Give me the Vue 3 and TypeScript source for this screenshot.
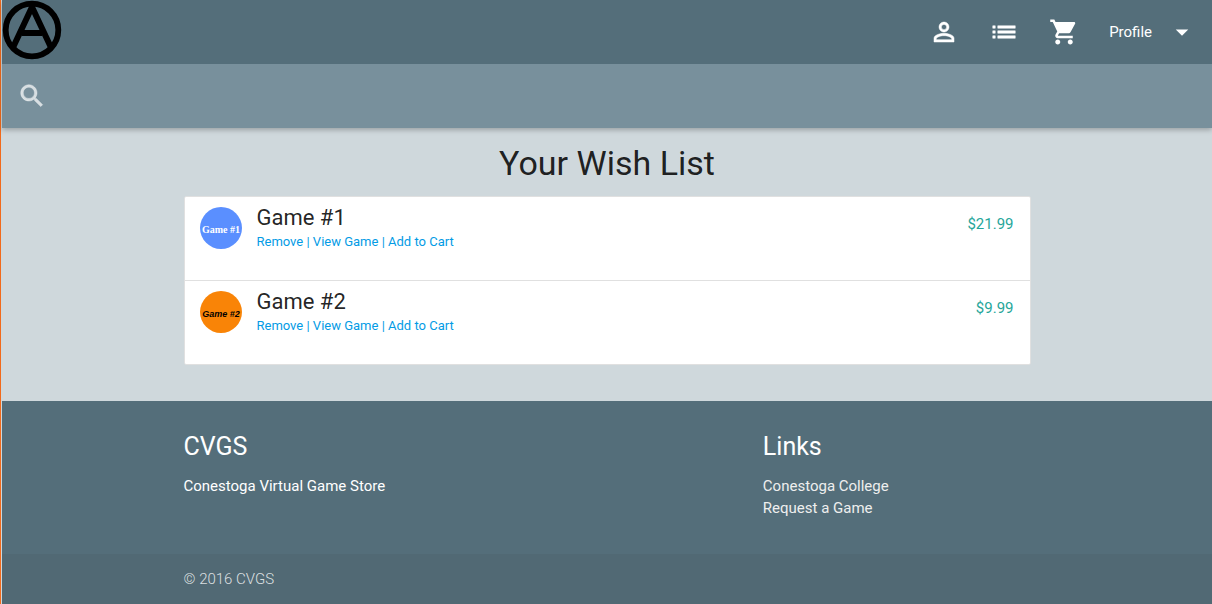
<script setup lang="ts">
interface Game {
  id: number
  name: string
  price: string
}

const games: Game[] = [
  { id: 1, name: 'Game #1', price: '$21.99' },
  { id: 2, name: 'Game #2', price: '$9.99' },
]
const actions: string[] = ['Remove', 'View Game', 'Add to Cart']
const links: string[] = ['Conestoga College', 'Request a Game']
</script>

<template>
  <div class="page">
    <header class="header">
      <nav class="nav">
        <a class="brand" href="#" aria-label="Home">
          <svg width="60" height="60" viewBox="0 0 60 60" fill="none" stroke="#000">
            <circle cx="30" cy="30" r="26.3" stroke-width="5.8" />
            <path d="M11 47.500 L30 7 L49 47.500 M20 33 H40" stroke-width="6" stroke-linejoin="bevel" />
          </svg>
        </a>
        <ul class="nav-items">
          <li>
            <a href="#" aria-label="Account">
              <svg class="icon" viewBox="0 0 24 24"><path d="M12 5.900a2.100 2.100 0 1 1 0 4.200 2.100 2.100 0 0 1 0-4.200m0 9c2.970 0 6.100 1.460 6.100 2.100v1.100H5.900V17c0-.64 3.130-2.100 6.100-2.100M12 4C9.790 4 8 5.790 8 8s1.790 4 4 4 4-1.790 4-4-1.790-4-4-4zm0 9c-2.670 0-8 1.340-8 4v3h16v-3c0-2.660-5.330-4-8-4z" stroke="currentColor" stroke-width="0.4" /></svg>
            </a>
          </li>
          <li>
            <a href="#" aria-label="Wish list">
              <svg class="icon" viewBox="0 0 24 24"><path d="M3 13h2v-2H3v2zm0 4h2v-2H3v2zm0-8h2V7H3v2zm4 4h14v-2H7v2zm0 4h14v-2H7v2zM7 7v2h14V7H7z" stroke="currentColor" stroke-width="0.4" /></svg>
            </a>
          </li>
          <li>
            <a href="#" aria-label="Cart">
              <svg class="icon" viewBox="0 0 24 24"><path d="M7 18c-1.100 0-1.990.9-1.990 2S5.900 22 7 22s2-.9 2-2-.9-2-2-2zM1 2v2h2l3.600 7.590-1.350 2.450c-.16.280-.25.610-.25.960 0 1.100.9 2 2 2h12v-2H7.420c-.14 0-.25-.11-.25-.25l.03-.12.900-1.630h7.450c.75 0 1.410-.41 1.750-1.030l3.580-6.490c.08-.14.120-.31.120-.48 0-.55-.45-1-1-1H5.210l-.94-2H1zm16 16c-1.100 0-1.990.9-1.990 2s.89 2 1.990 2 2-.9 2-2-.9-2-2-2z" /></svg>
            </a>
          </li>
          <li>
            <button class="profile" type="button">
              Profile
              <svg class="icon" viewBox="0 0 24 24"><path d="M7 10l5 5 5-5z" /></svg>
            </button>
          </li>
        </ul>
      </nav>
      <form class="search" @submit.prevent>
        <label for="search" aria-label="Search">
          <svg class="icon" viewBox="0 0 24 24"><path d="M15.500 14h-.79l-.28-.27C15.410 12.590 16 11.110 16 9.500 16 5.910 13.090 3 9.500 3S3 5.910 3 9.500 5.910 16 9.500 16c1.610 0 3.090-.59 4.230-1.570l.27.280v.79l5 4.990L20.490 19l-4.990-5zm-6 0C7.010 14 5 11.990 5 9.500S7.010 5 9.500 5 14 7.010 14 9.500 11.990 14 9.500 14z" stroke="currentColor" stroke-width="0.4" /></svg>
        </label>
        <input id="search" type="search" />
      </form>
    </header>

    <main class="container">
      <h1>Your Wish List</h1>
      <ul class="collection">
        <li v-for="game in games" :key="game.id" class="item">
          <svg class="avatar" :class="'cover-' + game.id" viewBox="0 0 42 42" aria-hidden="true">
            <text x="21" y="26" text-anchor="middle">{{ game.name }}</text>
          </svg>
          <div class="details">
            <h2>{{ game.name }}</h2>
            <p class="actions">
              <template v-for="(action, i) in actions" :key="action">
                <span v-if="i > 0"> | </span><a href="#">{{ action }}</a>
              </template>
            </p>
          </div>
          <span class="price">{{ game.price }}</span>
        </li>
      </ul>
    </main>

    <footer class="footer">
      <div class="container footer-columns">
        <section>
          <h3>CVGS</h3>
          <p>Conestoga Virtual Game Store</p>
        </section>
        <section>
          <h3>Links</h3>
          <ul>
            <li v-for="link in links" :key="link"><a href="#">{{ link }}</a></li>
          </ul>
        </section>
      </div>
      <div class="copyright">
        <div class="container">© 2016 CVGS</div>
      </div>
    </footer>
  </div>
</template>

<style>
body {
  margin: 0;
  background: #cfd8dc;
}
</style>

<style scoped>
.page {
  display: flex;
  flex-direction: column;
  min-height: 100vh;
  box-sizing: border-box;
  border-left: 1px solid #f26a1b;
  padding-left: 1px;
  font-family: Roboto, "Liberation Sans", sans-serif;
  font-size: 15px;
  line-height: 22px;
  color: rgba(0, 0, 0, 0.87);
}

h1,
h2,
h3,
p,
ul {
  margin: 0;
  padding: 0;
  font-weight: 400;
}

ul {
  list-style: none;
}

a {
  text-decoration: none;
}

.container {
  width: 70%;
  margin: 0 auto;
}

.header {
  box-shadow: 0 2px 5px rgba(0, 0, 0, 0.26);
}

.nav {
  display: flex;
  justify-content: space-between;
  height: 64px;
  background: #546e7a;
}

.brand svg {
  display: block;
}

.nav-items {
  display: flex;
}

.nav-items a,
.profile {
  display: flex;
  align-items: center;
  height: 64px;
  padding: 0 15px;
  color: #fff;
}

.profile {
  gap: 15px;
  border: 0;
  background: none;
  font: inherit;
}

.icon {
  display: block;
  width: 30px;
  height: 30px;
  fill: currentColor;
}

.search {
  display: flex;
  align-items: center;
  height: 64px;
  padding-left: 15px;
  background: #78909c;
  color: rgba(255, 255, 255, 0.7);
}

.search input {
  flex: 1;
  height: 62px;
  padding: 0 15px;
  border: 0;
  outline: 0;
  background: none;
  color: #fff;
  font: inherit;
}

h1 {
  margin: 16px 0 14px;
  font-size: 34px;
  line-height: 38px;
  text-align: center;
}

.collection {
  margin-bottom: 36px;
  border: 1px solid #e0e0e0;
  border-radius: 2px;
  overflow: hidden;
}

.item {
  display: flex;
  gap: 15px;
  min-height: 63px;
  padding: 10px 15px;
  background: #fff;
}

.item + .item {
  border-top: 1px solid #e0e0e0;
}

.avatar {
  width: 42px;
  height: 42px;
  border-radius: 50%;
}

.cover-1 {
  background: #5a8fff;
  fill: #fff;
  font: bold 10px "Liberation Serif", serif;
}

.cover-2 {
  background: #f98407;
  fill: #000;
  font: italic bold 9px "Liberation Sans Narrow", "Liberation Sans", sans-serif;
}

.details {
  flex: 1;
}

h2 {
  font-size: 22px;
  line-height: 22px;
}

.actions {
  margin-top: 2px;
  font-size: 13px;
}

.actions,
.actions a {
  color: #039be5;
}

.price {
  margin: 6px 1px 0 0;
  color: #26a69a;
}

.footer {
  display: flex;
  flex: 1;
  flex-direction: column;
  background: #546e7a;
  color: #fff;
}

.footer-columns {
  display: grid;
  grid-template-columns: 68.4% 1fr;
  padding: 30px 0 35px;
}

h3 {
  margin-bottom: 13px;
  font-size: 25px;
  line-height: 31px;
}

.footer-columns a {
  color: #eee;
}

.copyright {
  flex: 1;
  background: rgba(51, 51, 51, 0.08);
  color: rgba(255, 255, 255, 0.8);
  font-weight: 300;
  line-height: 50px;
}
</style>
